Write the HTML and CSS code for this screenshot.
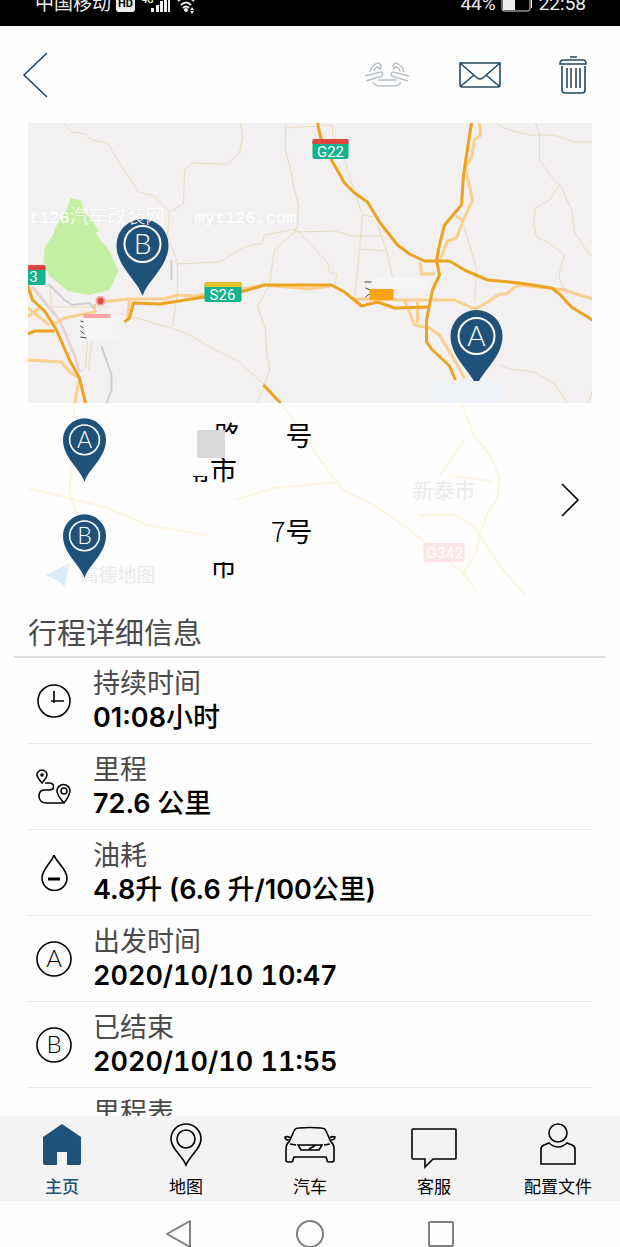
FILE: index.html
```html
<!DOCTYPE html>
<html lang="zh-CN">
  <head>
    <meta charset="UTF-8" />
    <meta name="viewport" content="width=device-width, initial-scale=1" />
    <title>行程详细信息</title>
    <link rel="stylesheet" href="styles.css">
  </head>
  <body>
    <div class="status">
      <span class="carrier">中国移动</span>
      <span class="hd">HD</span>
      <svg class="signal" width="32" height="20" viewBox="0 0 32 20">
        <text x="4" y="7" font-size="9" font-weight="700">4G</text>
        <path d="M13 12h3v4h-3zM18 9h3v7h-3zM22 5h3v11h-3zM26 2h3v14h-3zM30 0h2v16h-2z" />
      </svg>
      <svg class="wifi" width="20" height="20" viewBox="0 0 20 20">
        <path d="M1 5q8-7 16 0M4 9q5-5 10 0M6 12q3-3 6 0" fill="none" stroke="#eee" stroke-width="2" />
        <circle cx="9" cy="14" r="2" />
        <path d="M15 11l2 3h-4zM13 15h4l-2 3z" />
      </svg>
      <span class="percent">44%</span>
      <svg class="battery" width="31" height="20" viewBox="0 0 31 20">
        <rect x="1" y="1" width="28" height="14" rx="2" fill="none" stroke="#ddd" stroke-width="1" />
        <path d="M2 2h12v12H2zM30 3h1v9h-1z" />
      </svg>
      <span class="time">22:58</span>
    </div>

    <header class="header">
      <button class="icon-btn back" aria-label="返回">
        <svg width="26" height="46" viewBox="0 0 26 46"><path d="M25 1L2 23l23 22" /></svg>
      </button>
      <button class="icon-btn muted" aria-label="拼车">
        <svg width="46" height="40" viewBox="0 0 46 40">
          <path d="M1 21l16-4q3 1 1 4L2 26M45 21l-16-4q-3 1-1 4l16 5" />
          <path d="M6 17q2-8 9-9l2 3-1 3-2-2q-3 0-4 4M40 17q-2-8-9-9l-2 3 1 3 2-2q3 0 4 4" />
          <path d="M14 25h19M9 27q2 4 7 4h14q5 0 7-4" />
        </svg>
      </button>
      <button class="icon-btn" aria-label="邮件">
        <svg width="46" height="40" viewBox="0 0 46 40">
          <path d="M3 8h40v22q0 2-2 2H5q-2 0-2-2zM3 8l16 14q4 4 8 0L43 8M4 31l13-11M42 31L29 20" />
        </svg>
      </button>
      <button class="icon-btn" aria-label="删除">
        <svg width="46" height="40" viewBox="0 0 46 40">
          <path d="M20 2h7M10 9q0-4 3-4h20q3 0 3 4zM12 11v24q0 3 3 3h17q3 0 3-3V11M17 13v20M21 13v20M26 13v20M30 13v20" />
        </svg>
      </button>
    </header>

    <main class="content">
      <section class="trip">
        <svg class="map" viewBox="28 123 565 280" preserveAspectRatio="xMidYMid slice">
          <defs>
            <path id="pin" d="M26 77C21 61 0 48 0 26a26 26 0 0 1 52 0C52 48 31 61 26 77z" />
          </defs>
          <rect x="28" y="123" width="565" height="280" fill="#f2f0f1" />
          <path class="park" d="M71 198l11 3 2 10 11 13 5 7-4 2 14 18 9 20-9 19-20 5-22-4-18-15-6-15 1-13 8-12 5-13 9-13z" />
          <!-- minor roads -->
          <g class="minor">
            <path d="M64 123l8 9 13 2 7 6 16 3 10 17 12 18 9 14 16 4 15 16 14-8 1-34 8-7 34 1 13-11 3-16-2-14" />
            <path d="M170 212l-2 23 10 27v30l-5 34" />
            <path d="M286 123v27l4 15 4 20 5 20-1 20-3 7-20 18-3 20-2 15-12 21 8 24 1 20 3 20-5 15-7 18" />
            <path d="M178 264l42-2 25-15 18-4 2-8 32-6 31 34 2 9 7 2-1 11" />
            <path d="M295 232l40-1 17 5h30M287 128l46-3v10l12 25 13 40 5 15-3 35-3 30-2 20M360 249l27 2M363 215l12 2M378 225l9 26 6 26" />
            <path d="M50 285l2 22h58M120 313l30 9 22 6 18 7 20 12 30 15 25 23M88 342l-2 25-4 5M92 342l-3 28" />
            <path d="M495 123l15 7 20 5h25l20 7h18M536 123l4 12v25l12 17 10 10 10 23 3 22 15 23h3" />
            <path d="M560 185l-10 15-14 8-2 14 3 15 13 6 15 12-5 17v8l8 15M464 225l6 20 7 23-2 34M500 365l10 4 25 3 21 13 12 18M593 390l-4 13" />
          </g>
          <g class="rail">
            <path d="M49 284l16 16 8 5 17-2 7 9M172 260v20M102 346l10 29v15l-5 13" />
            <path class="pink" d="M33 287l27 33 15 35 5 17" />
          </g>
          <!-- secondary roads -->
          <g class="second">
            <path d="M480 123l1 12-6 5-3 17-6 11 2 9 5 23-10 22-6 16-9 3-6 16-4 5M456 216l7 4" />
            <path d="M355 299l50 1h50l20 9 7-3 18-12h7l11-9 22 2 25 3 28 9" />
            <path d="M100 302l30-3h35l13-4 17 1 48-7 22-4 45 4 20-3" />
            <path d="M405 300l10 25 15 3 10 7 15 25 10 18M418 302v21M421 262l1 12h14" />
            <path d="M28 360l34 2 8 10 10 6-5 25M28 317l12-9M50 325l-22-17M55 324l10-6 30-6v-8M130 299l-2 21" />
          </g>
          <!-- motorways -->
          <g class="major">
            <path d="M318 123l3 14 11 23 13 23 10 10 13 9 12 20 18 23 12 9 15 7h25l15 9 23 10 32 3 32 5 8 6 12 13 21 13" />
            <path d="M472 123l-8 52-2 30-17 20-5 20-3 15 3 15-7 15-6 30v22l5 7 18 17 6 14" />
            <path d="M125 322l5-4 4-15 26 1 45-7 40-6 20-6h67l13 7 17 14 16-4 17 6 35-1" />
            <path d="M28 285l5 15 12 11 12 19 13 30 10 18 6 25M28 334l7-3h20M264 385l17 18" />
          </g>
          <circle cx="101" cy="301" r="5" fill="#f6a09d" />
          <circle cx="101" cy="301" r="3" fill="#e4423f" />
          <path d="M84 314h27v4H84z" fill="#f5a6a4" />
          <path class="smudge" d="M82 318h38v22H82z" />
          <path class="trace" d="M81 321l3 1M81 326l3 2M81 331l4 3M81 337l6 1M365 282h7M366 288l5 2M366 297l5-4M371 291l4 6" />
          <path d="M370 289h24v11h-24z" fill="#fca311" />
          <path class="smudge" d="M374 278h54v11h-54z" />

          <g class="shield">
            <rect x="313" y="139" width="36" height="20" rx="2" fill="#12b28c" />
            <path d="M313 144v-3q0-2 2-2h32q2 0 2 2v3z" fill="#e0443e" />
            <text x="331" y="157">G22</text>
            <rect x="205" y="282" width="37" height="20" rx="2" fill="#12b28c" />
            <path d="M205 287v-3q0-2 2-2h33q2 0 2 2v3z" fill="#e8c22c" />
            <text x="223" y="300">S26</text>
            <rect x="10" y="265" width="36" height="20" rx="2" fill="#12b28c" />
            <path d="M10 270v-5h34q2 0 2 2v3z" fill="#e0443e" />
            <text x="34" y="282">3</text>
          </g>

          <use href="#pin" x="117" y="219" class="pin" />
          <circle class="ring" cx="143" cy="244" r="18" />
          <text class="letter" x="143" y="254">B</text>
          <use href="#pin" x="451" y="310" class="pin" />
          <circle class="ring" cx="477" cy="336" r="18" />
          <text class="letter" x="477" y="346">A</text>
          <path d="M433 381h72v22h-72z" fill="#eff3f8" />

          <text class="watermark" x="9" y="223">myt126</text>
          <text class="watermark han" x="70" y="223">汽车改装网</text>
          <text class="watermark" x="195" y="223">myt126.com</text>
        </svg>

        <div class="places">
          <svg class="faded" viewBox="28 403 565 194" preserveAspectRatio="xMidYMid slice">
            <path d="M28 488l40 10 40 10 40 17 60 10M75 403l-5 90 20 60M235 500l40-12 65-6M281 403l22 30 20 30 20 27 30 14 40 28 52 42 12 18M462 403l12 32 18 22 8 22-2 18-12 20-10 36-14 24M440 476l25-36M420 515h35l20 12 30 45 20 22M450 476l42 5" />
            <text x="413" y="498" font-size="21">新泰市</text>
            <rect x="424" y="543" width="41" height="19" rx="2" fill="#fbe5e6" />
            <text class="road-no" x="427" y="558" font-size="14">G342</text>
            <path d="M46 575l24-12-5 24-6-6z" class="arrow" />
            <text x="80" y="582" font-size="19">高德地图</text>
          </svg>
          <div class="place-list">
            <div class="place">
              <svg class="place-pin" width="43" height="66" viewBox="0 0 52 79">
                <use href="#pin" class="pin" />
                <circle class="ring" cx="26" cy="26" r="18" />
                <text class="letter" x="26" y="36">A</text>
              </svg>
              <div class="address">
                <p><span class="road top-half">路</span><span class="number gone">7</span>号</p>
                <p class="city"><span class="sliver">南</span>市</p>
                <span class="block"></span>
              </div>
            </div>
            <div class="place">
              <svg class="place-pin" width="43" height="66" viewBox="0 0 52 79">
                <use href="#pin" class="pin" />
                <circle class="ring" cx="26" cy="26" r="18" />
                <text class="letter" x="26" y="36">B</text>
              </svg>
              <div class="address">
                <p><span class="road gone">路</span><span class="number">7</span>号</p>
                <p class="city"><span class="gone">南</span><span class="bottom-half">市</span></p>
              </div>
            </div>
          </div>
          <button class="icon-btn next" aria-label="查看路线">
            <svg width="20" height="36" viewBox="0 0 20 36"><path d="M2 2l16 16L2 34" /></svg>
          </button>
        </div>
      </section>

      <h2>行程详细信息</h2>
      <ul class="details">
        <li>
          <svg class="row-icon" width="36" height="36" viewBox="0 0 36 36">
            <circle cx="18" cy="18" r="16" /><path d="M18 8v12M15 18h13" />
          </svg>
          <div>
            <p class="label">持续时间</p>
            <p class="value">01:08<span>小时</span></p>
          </div>
        </li>
        <li>
          <svg class="row-icon" width="36" height="36" viewBox="0 0 36 36">
            <path d="M6 14Q1 8 1 6a5 5 0 0 1 10 0q0 2-5 8zM28 34q-7-8-7-12a6 6 0 0 1 13 0q0 4-6 12z" />
            <circle cx="6" cy="6" r="1" /><circle cx="28" cy="22" r="3" />
            <path d="M9 14h4c6 0 6 7 0 7H8c-7 0-7 13 2 13h17" />
          </svg>
          <div>
            <p class="label">里程</p>
            <p class="value">72.6 <span>公里</span></p>
          </div>
        </li>
        <li>
          <svg class="row-icon" width="36" height="36" viewBox="0 0 36 36">
            <path d="M18 0C16 7 6 14 6 23a12 12 0 0 0 25 0C31 14 20 7 18 0z" />
            <path d="M12 24h12" stroke-width="3" />
          </svg>
          <div>
            <p class="label">油耗</p>
            <p class="value">4.8<span>升</span> (6.6 <span>升</span>/100<span>公里</span>)</p>
          </div>
        </li>
        <li>
          <svg class="row-icon" width="36" height="36" viewBox="0 0 36 36">
            <circle cx="18" cy="18" r="17" /><text x="18" y="26">A</text>
          </svg>
          <div>
            <p class="label">出发时间</p>
            <p class="value date">2020/10/10 10:47</p>
          </div>
        </li>
        <li>
          <svg class="row-icon" width="36" height="36" viewBox="0 0 36 36">
            <circle cx="18" cy="18" r="17" /><text x="18" y="26">B</text>
          </svg>
          <div>
            <p class="label">已结束</p>
            <p class="value date">2020/10/10 11:55</p>
          </div>
        </li>
        <li>
          <span class="row-icon"></span>
          <div>
            <p class="label">里程表</p>
          </div>
        </li>
      </ul>
    </main>

    <nav class="tabs">
      <a href="#home" class="active">
        <svg width="54" height="48" viewBox="0 0 54 48">
          <path d="M27 3l19 13v26q0 2-2 2H32V31H22v13H10q-2 0-2-2V16z" />
        </svg>
        主页
      </a>
      <a href="#map">
        <svg width="54" height="48" viewBox="0 0 54 48">
          <path d="M27 44C23 34 12 28 12 18a15 15 0 0 1 30 0c0 10-11 16-15 26z" />
          <circle cx="27" cy="18" r="9" />
        </svg>
        地图
      </a>
      <a href="#car">
        <svg width="54" height="48" viewBox="0 0 54 48">
          <path d="M6 21l5-11q1-3 5-3 11-1 22 0 4 0 5 3l5 11q3 2 3 7v11q0 2-2 2h-3q-2 0-2-2l-1-3H11l-1 3q0 2-2 2H5q-2 0-2-2V28q0-5 3-7z" />
          <path d="M6 19q-4 0-4-3 4-1 5 1M48 19q4 0 4-3-4-1-5 1M7 23l6 1M47 23l-6 1M15 24h24l-3 5H18zM26 28l7-4" />
        </svg>
        汽车
      </a>
      <a href="#service">
        <svg width="54" height="48" viewBox="0 0 54 48">
          <path d="M6 8h42q1 0 1 1v28q0 1-1 1H26l-8 8v-8H6q-1 0-1-1V9q0-1 1-1z" />
        </svg>
        客服
      </a>
      <a href="#profile">
        <svg width="54" height="48" viewBox="0 0 54 48">
          <circle cx="27" cy="12" r="9" />
          <path d="M18 22q9 8 18 0l5 2q3 1 3 4v15H10V28q0-3 3-4z" />
        </svg>
        配置文件
      </a>
    </nav>

    <div class="system">
      <button aria-label="返回"><svg width="30" height="30" viewBox="0 0 30 30"><path d="M26 2v26L3 15z" /></svg></button>
      <button aria-label="主屏幕"><svg width="30" height="30" viewBox="0 0 30 30"><circle cx="15" cy="15" r="13" /></svg></button>
      <button aria-label="最近任务"><svg width="30" height="30" viewBox="0 0 30 30"><rect x="3" y="3" width="24" height="24" rx="1" /></svg></button>
    </div>
  </body>
</html>
```

FILE: styles.css
```css
* {
  box-sizing: border-box;
  margin: 0;
  padding: 0;
}

body {
  font-family: Inter, "Noto Sans CJK SC", sans-serif;
  background-color: #fefefe;
  color: #000;
  display: flex;
  flex-direction: column;
  height: 100vh;
  overflow: hidden;
}

svg {
  display: block;
  flex: none;
}

button {
  background: none;
  border: none;
  cursor: pointer;
}

/* phone status bar */
.status {
  display: flex;
  align-items: flex-end;
  flex: none;
  height: 26px;
  padding: 0 34px 12px 35px;
  overflow: hidden;
  background-color: #000;
  color: #eee;
  font-family: Roboto, "Noto Sans CJK SC", sans-serif;
  font-size: 19px;
  line-height: 20px;
}

.status svg {
  fill: #eee;
  margin-bottom: -2px;
}

.hd {
  margin: 0 3px 2px 5px;
  padding: 0 2px;
  border-radius: 3px;
  background-color: #eee;
  color: #000;
  font-size: 11px;
  font-weight: 700;
  line-height: 16px;
}

.signal {
  margin-right: 7px;
}

.percent {
  margin-left: auto;
}

.battery {
  margin: 0 7px 0 5px;
}

.header {
  display: flex;
  align-items: center;
  gap: 47px;
  flex: none;
  height: 97px;
  padding: 0 24px 0 22px;
}

.icon-btn svg {
  fill: none;
  stroke: #234a66;
  stroke-width: 1.6;
}

.back {
  margin-right: auto;
}

.muted svg {
  stroke: #b9c0ca;
}

.content {
  flex: 1;
  min-height: 0;
  overflow: hidden;
}

.trip {
  margin: 0 28px;
}

.map {
  width: 100%;
  height: 280px;
}

.park {
  fill: #c5f0a4;
}

.minor,
.rail,
.second,
.major {
  fill: none;
  stroke-linejoin: round;
}

.minor {
  stroke: #e7dfc0;
  stroke-width: 1;
}

.rail {
  stroke: #cfced4;
  stroke-width: 2;
}

.rail .pink {
  stroke: #e6d3d8;
  stroke-width: 3;
}

.second {
  stroke: #fbcf8e;
  stroke-width: 3;
}

.major {
  stroke: #eca31f;
  stroke-width: 3;
}

.smudge {
  fill: #f6f5f6;
}

.trace {
  fill: none;
  stroke: #444;
  stroke-width: 1;
}

.shield text {
  fill: #fff;
  font-family: Roboto, sans-serif;
  font-size: 15px;
  text-anchor: middle;
}

.pin {
  fill: #205179;
}

.ring {
  fill: none;
  stroke: #fff;
  stroke-width: 2;
}

.letter {
  fill: #fff;
  font-family: Lato, sans-serif;
  font-size: 28px;
  font-weight: 300;
  text-anchor: middle;
}

.watermark {
  fill: #fff;
  font-family: "Liberation Mono", monospace;
  font-size: 17px;
}

.han {
  font-family: "Noto Sans CJK SC", sans-serif;
  font-size: 19px;
  font-weight: 300;
}

/* start and end addresses over the faded map */
.places {
  position: relative;
  display: flex;
  align-items: center;
  justify-content: space-between;
  height: 194px;
  padding: 0 12px 0 35px;
  background-color: #fdfdfd;
}

.faded {
  position: absolute;
  top: 0;
  left: 0;
  width: 100%;
  height: 100%;
}

.faded path {
  fill: none;
  stroke: #fdf5e2;
  stroke-width: 2;
}

.faded text {
  fill: #eaeaec;
}

.faded .road-no {
  fill: #fff;
}

.faded .arrow {
  fill: #dcebf8;
  stroke: none;
}

.place-list {
  position: relative;
  display: grid;
  gap: 28px;
}

.place {
  display: flex;
  gap: 108px;
}

.address {
  position: relative;
  font-family: "Noto Sans CJK SC", sans-serif;
  font-size: 27px;
  line-height: 34px;
}

.address span {
  display: inline-block;
}

.road {
  margin-right: 30px;
}

.number {
  font-weight: 300;
}

.gone {
  visibility: hidden;
}

.top-half {
  clip-path: inset(0 0 18px 0);
}

.bottom-half {
  clip-path: inset(14px 0 0 0);
}

.sliver {
  clip-path: inset(24px 0 4px 10px);
}

.address .block {
  position: absolute;
  top: 12px;
  left: -17px;
  width: 28px;
  height: 28px;
  background-color: #d9d9d9;
}

.city {
  margin-left: -31px;
}

.next {
  position: relative;
}

.next svg {
  stroke: #000;
}

h2 {
  margin: 0 14px;
  padding: 17px 14px 2px;
  border-bottom: 2px solid #dedede;
  color: #4a4a4a;
  font-size: 29px;
  font-weight: 400;
  line-height: 40px;
}

.details {
  list-style: none;
  margin: 0 27px;
}

.details li {
  display: flex;
  align-items: center;
  gap: 21px;
  height: 86px;
  padding-left: 9px;
  border-bottom: 1px solid #ebebeb;
  font-size: 27px;
  line-height: 34px;
}

.details li:last-child {
  align-items: flex-start;
  padding-top: 8px;
}

.row-icon {
  width: 36px;
  fill: none;
  stroke: #000;
  stroke-width: 1.6;
}

.row-icon text {
  fill: #000;
  stroke: none;
  font-family: Lato, sans-serif;
  font-size: 24px;
  font-weight: 300;
  text-anchor: middle;
}

.label {
  color: #4a4a4a;
}

.value {
  font-weight: 600;
}

.value span {
  font-weight: 500;
}

.date {
  font-variant-numeric: tabular-nums;
}

.tabs {
  display: flex;
  flex: none;
  height: 85px;
  padding-top: 5px;
  background-color: #f3f3f3;
}

.tabs a {
  display: flex;
  flex: 1;
  flex-direction: column;
  align-items: center;
  gap: 6px;
  color: #000;
  font-size: 17px;
  line-height: 24px;
  text-decoration: none;
}

.tabs svg {
  fill: none;
  stroke: #000;
  stroke-width: 1.6;
}

.tabs .active {
  color: #205179;
  font-weight: 500;
}

.active svg {
  fill: #205179;
  stroke: none;
}

.system {
  display: flex;
  justify-content: center;
  gap: 101px;
  flex: none;
  height: 46px;
  padding-top: 18px;
  overflow: hidden;
  background-color: #fcfcfc;
}

.system svg {
  fill: none;
  stroke: #808080;
  stroke-width: 2;
  stroke-linejoin: round;
}
```
